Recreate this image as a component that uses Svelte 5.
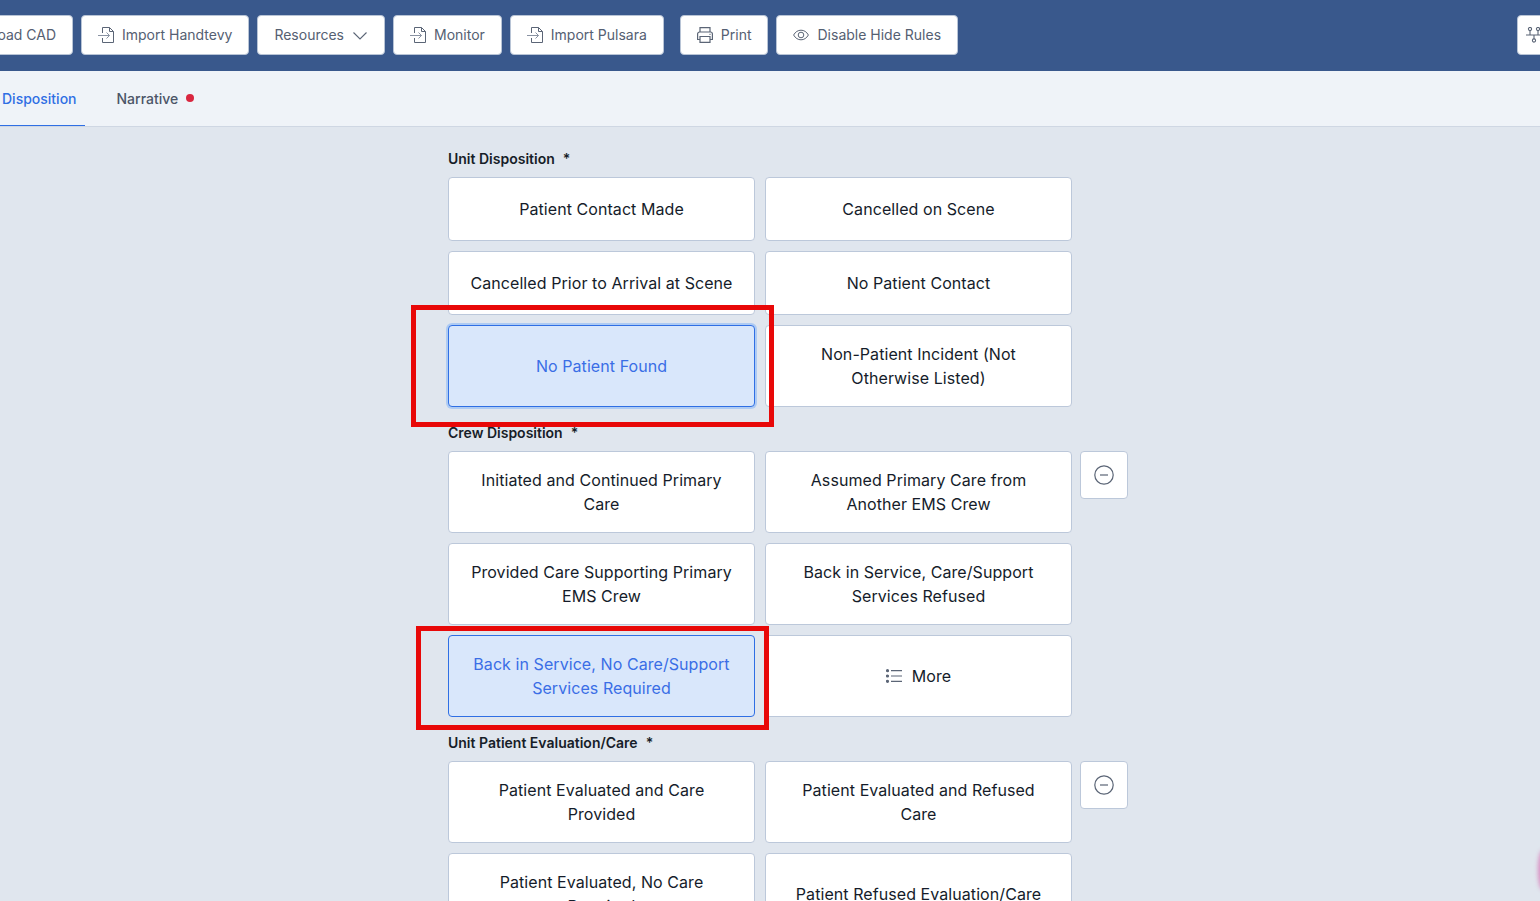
<script>
	const crew = [
		{ label: 'Initiated and Continued Primary Care' },
		{ label: 'Assumed Primary Care from Another EMS Crew' },
		{ label: 'Provided Care Supporting Primary EMS Crew' },
		{ label: 'Back in Service, Care/Support Services Refused' },
		{ label: 'Back in Service, No Care/Support Services Required', selected: true },
		{ label: 'More', more: true }
	];
	const unit = [
		{ label: 'Patient Contact Made' },
		{ label: 'Cancelled on Scene' },
		{ label: 'Cancelled Prior to Arrival at Scene' },
		{ label: 'No Patient Contact' },
		{ label: 'No Patient Found', selected: true, focus: true },
		{ label: 'Non-Patient Incident (Not Otherwise Listed)' }
	];
	const evaluation = [
		{ label: 'Patient Evaluated and Care Provided' },
		{ label: 'Patient Evaluated and Refused Care' },
		{ label: 'Patient Evaluated, No Care Required' },
		{ label: 'Patient Refused Evaluation/Care' }
	];
	const sections = [
		{ title: 'Unit Disposition', options: unit, collapse: false },
		{ title: 'Crew Disposition', options: crew, collapse: true },
		{ title: 'Unit Patient Evaluation/Care', options: evaluation, collapse: true }
	];
</script>

{#snippet fileIcon()}
	<svg class="icon" viewBox="0 0 16 16" fill="none" stroke="currentColor" stroke-width="1">
		<path d="M4.500 6V.5h7l4 4v11h-11V11" />
		<path d="M11.500.5v4h4" />
		<path class="arrow" d="M0 8.500h11.500M8.500 5.500l3 3-3 3" />
	</svg>
{/snippet}

<div class="page">
	<header class="toolbar">
		<button class="tool">{@render fileIcon()}Upload CAD</button>
		<button class="tool">{@render fileIcon()}Import Handtevy</button>
		<button class="tool resources">
			Resources
			<svg class="icon chevron" viewBox="0 0 16 16" fill="none" stroke="currentColor" stroke-width="1.100">
				<path d="M.5 5.500 7 12l6.500-6.500" />
			</svg>
		</button>
		<button class="tool">{@render fileIcon()}Monitor</button>
		<button class="tool">{@render fileIcon()}Import Pulsara</button>
		<button class="tool print">
			<svg class="icon" viewBox="0 0 16 16" fill="none" stroke="currentColor" stroke-width="1.200">
				<path d="M3 5V.6h10V5" />
				<path d="M3 12.500H.6V7a2 2 0 0 1 2-2h10.800a2 2 0 0 1 2 2v5.500H13" />
				<path d="M3 9.500h10v5.900H3z" />
				<path d="M12.500 7.300h1" />
			</svg>
			Print
		</button>
		<button class="tool hide-rules">
			<svg class="icon" viewBox="0 0 16 16" fill="none" stroke="currentColor" stroke-width="1">
				<path d="M.6 8C2.400 4.800 5 3.200 8 3.200s5.600 1.600 7.400 4.800c-1.800 3.200-4.400 4.800-7.400 4.800S2.400 11.200.6 8z" />
				<circle cx="8" cy="8" r="2.800" />
			</svg>
			Disable Hide Rules
		</button>
		<button class="tool network" aria-label="Workflow">
			<svg class="icon" viewBox="0 0 16 16" fill="none" stroke="currentColor" stroke-width="1.100">
				<circle cx="4" cy="2" r="1.600" />
				<circle cx="12" cy="2" r="1.600" />
				<circle cx="8" cy="13.500" r="1.600" />
				<path d="M0 8h16M4 3.600V8M12 3.600V8M8 8v3.900" />
			</svg>
		</button>
	</header>

	<nav class="tabs">
		<button class="tab active">Disposition</button>
		<button class="tab">Narrative<span class="dot"></span></button>
	</nav>

	<main class="content">
		{#each sections as section}
			<section class="section">
				<div class="label">{section.title}<span class="req">*</span></div>
				<div class="row">
					<div class="grid">
						{#each section.options as opt}
							<button class="option" class:selected={opt.selected} class:focus={opt.focus}>
								{#if opt.more}
									<svg class="icon list" viewBox="0 0 16 16" fill="none" stroke="currentColor" stroke-width="1.200">
										<path d="M5 2.700h11M5 8h11M5 13.300h11" />
										<circle cx="1.500" cy="2.700" r="1" fill="currentColor" />
										<circle cx="1.500" cy="8" r="1" fill="currentColor" />
										<circle cx="1.500" cy="13.300" r="1" fill="currentColor" />
									</svg>
								{/if}
								<span>{opt.label}</span>
							</button>
						{/each}
					</div>
					{#if section.collapse}
						<button class="collapse" aria-label="Collapse {section.title}">
							<svg viewBox="0 0 20 20" fill="none" stroke="currentColor" stroke-width="1.200">
								<circle cx="10" cy="10" r="9.200" />
								<path d="M6 10h8" />
							</svg>
						</button>
					{/if}
				</div>
			</section>
		{/each}
	</main>

	<div class="annot first"></div>
	<div class="annot second"></div>
	<div class="blob"></div>
</div>

<style>
	:global(body) {
		margin: 0;
		background: #e0e6ee;
		overflow: hidden;
	}
	.page {
		position: relative;
		height: 901px;
		overflow: hidden;
		font-family: Inter, "Liberation Sans", sans-serif;
		background: #e0e6ee;
	}
	button {
		font-family: inherit;
		cursor: pointer;
	}
	.icon {
		width: 16px;
		height: 16px;
		flex: none;
	}
	.toolbar {
		display: flex;
		gap: 8px;
		height: 71px;
		box-sizing: border-box;
		padding: 15px 0 0;
		margin: 0 -25px 0 -66px;
		background: #39588c;
	}
	.tool {
		display: flex;
		align-items: center;
		flex: none;
		gap: 8px;
		height: 40px;
		padding: 0 16px 1px;
		background: #fff;
		border: 1px solid #b8c4d6;
		border-radius: 4px;
		color: #556072;
		font-size: 14px;
	}
	.tool .icon {
		color: #5b6576;
	}
	.tool .arrow {
		stroke: #8a93a3;
	}
	.resources {
		gap: 9px;
		padding-right: 15px;
	}
	.print {
		margin-left: 8px;
		padding-right: 15px;
	}
	.hide-rules {
		gap: 9px;
	}
	.network {
		margin-left: auto;
		width: 48px;
		padding: 0 0 0 8px;
		justify-content: flex-start;
	}
	.tabs {
		display: flex;
		height: 56px;
		box-sizing: border-box;
		margin-left: -6px;
		background: #eff3f8;
		border-bottom: 1px solid #cfd7e3;
	}
	.tab {
		display: flex;
		align-items: center;
		height: 55px;
		padding: 0 8px;
		margin-right: 24px;
		background: none;
		border: 0;
		border-bottom: 1px solid transparent;
		color: #4b5567;
		font-size: 14px;
		font-weight: 500;
	}
	.tab.active {
		color: #2f6fe4;
		border-bottom-color: #2f6fe4;
	}
	.dot {
		width: 8px;
		height: 8px;
		margin-left: 8px;
		border-radius: 50%;
		background: #d9263f;
	}
	.content {
		padding: 22px 0 0 448px;
	}
	.section {
		margin-bottom: 16px;
	}
	.label {
		height: 20px;
		line-height: 20px;
		margin-bottom: 8px;
		font-size: 14px;
		font-weight: 600;
		color: #171d28;
	}
	.req {
		margin-left: 8px;
	}
	.row {
		display: flex;
		align-items: flex-start;
		gap: 8px;
	}
	.grid {
		display: grid;
		grid-template-columns: 307px 307px;
		gap: 10px;
	}
	.option {
		display: flex;
		align-items: center;
		justify-content: center;
		gap: 10px;
		min-height: 64px;
		box-sizing: border-box;
		padding: 16px 20px;
		background: #fff;
		border: 1px solid #bcc8da;
		border-radius: 4px;
		color: #151c2a;
		font-size: 16px;
		letter-spacing: 0.07px;
		line-height: 24px;
		text-align: center;
	}
	.option.selected {
		background: #d9e7fb;
		border-color: #2f6fe4;
		color: #3a6ee6;
	}
	.option.focus {
		box-shadow: 0 0 0 2px #aecbf3;
	}
	.list {
		color: #5b6576;
	}
	.collapse {
		display: flex;
		align-items: center;
		justify-content: center;
		width: 48px;
		height: 48px;
		padding: 0;
		background: #fff;
		border: 1px solid #bcc8da;
		border-radius: 4px;
		color: #5b6576;
	}
	.collapse svg {
		width: 20px;
		height: 20px;
	}
	.annot {
		position: absolute;
		box-sizing: border-box;
		border: 5px solid #e80808;
		pointer-events: none;
	}
	.first {
		left: 411px;
		top: 305px;
		width: 363px;
		height: 122px;
	}
	.second {
		left: 416px;
		top: 626px;
		width: 353px;
		height: 104px;
	}
	.blob {
		position: absolute;
		right: -8px;
		top: 850px;
		width: 10px;
		height: 40px;
		border-radius: 50%;
		background: #d98cc0;
		filter: blur(2px);
	}
</style>
